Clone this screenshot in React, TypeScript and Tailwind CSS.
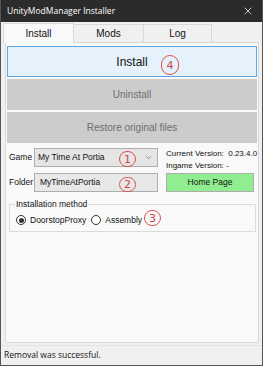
import { X, ChevronDown } from 'lucide-react'

function Mark({ n, className }: { n: string; className: string }) {
  return (
    <span
      className={`absolute flex items-center justify-center rounded-full border border-[#d9534f] text-[#d0453f] text-[11px] leading-none font-['DejaVu_Sans',sans-serif] ${className}`}
    >
      {n}
    </span>
  )
}

function Radio({ checked, label }: { checked?: boolean; label: string }) {
  return (
    <label className="flex items-center gap-[4px]">
      <span className="flex h-[10px] w-[10px] items-center justify-center rounded-full border border-[#333] bg-white">
        {checked && <span className="h-[5px] w-[5px] rounded-full bg-[#333]" />}
      </span>
      <span>{label}</span>
    </label>
  )
}

export default function App() {
  return (
    <div className="flex h-[366px] w-[263px] flex-col border-x border-b border-[#555] bg-[#f0f0f0] font-['Liberation_Sans',Arial,sans-serif] text-[8.5px] text-[#111]">
      {/* title bar */}
      <div className="flex h-[22px] shrink-0 items-center justify-between bg-[#2b2b2b] pl-[6px] pr-[8px] text-[8.5px] text-white font-['Open_Sans',sans-serif]">
        <span className="whitespace-nowrap">UnityModManager Installer</span>
        <X className="h-[12px] w-[12px]" strokeWidth={1.5} />
      </div>

      {/* tabs */}
      <div className="flex h-[20px] shrink-0 items-end pl-[2px]">
        <div className="relative z-10 -mb-px flex h-[20px] w-[71px] items-center justify-center border-x border-t border-[#d9d9d9] bg-[#f9f9f9] text-[10px]">
          Install
        </div>
        <div className="flex h-[18px] w-[70px] items-center justify-center border-t border-r border-[#d9d9d9] bg-[#f0f0f0] text-[10px]">
          Mods
        </div>
        <div className="flex h-[18px] w-[68px] items-center justify-center border-t border-r border-[#d9d9d9] bg-[#f0f0f0] text-[10px]">
          Log
        </div>
      </div>

      {/* tab page */}
      <div className="relative ml-[4px] mr-[3px] flex h-[301px] shrink-0 flex-col border border-[#d9d9d9] bg-[#f9f9f9] px-[1px] pt-[3px]">
        <div className="flex flex-col gap-[2px]">
          <button className="relative flex h-[31px] items-center justify-center border border-[#5aa9e6] bg-[#e5f1fb] text-[12px] text-[#111]">
            Install
          </button>
          <button className="flex h-[31px] items-center justify-center border border-[#cccccc] bg-[#cccccc] text-[10px] text-[#6d6d6d]">
            Uninstall
          </button>
          <button className="flex h-[31px] items-center justify-center border border-[#cccccc] bg-[#cccccc] text-[10px] text-[#6d6d6d]">
            Restore original files
          </button>
        </div>

        <div className="mt-[5px] flex">
          <div className="flex shrink-0 flex-col gap-[6px]">
            <div className="flex items-center">
              <span className="w-[27px] pl-[2px]">Game</span>
              <div className="flex h-[19px] w-[124px] items-center justify-between border border-[#adadad] bg-[#e5e5e5] pl-[3px] pr-[4px]">
                <span>My Time At Portia</span>
                <ChevronDown className="h-[9px] w-[9px] text-[#555]" strokeWidth={1.5} />
              </div>
            </div>
            <div className="flex items-center">
              <span className="w-[27px] pl-[2px]">Folder</span>
              <div className="flex h-[19px] w-[124px] items-center border border-[#adadad] bg-[#e8e8e8] pl-[5px]">
                MyTimeAtPortia
              </div>
            </div>
          </div>
          <div className="ml-[8px] flex flex-col whitespace-nowrap">
            <div className="text-[8px] leading-[12px]">Current Version:&nbsp; 0.23.4.0</div>
            <div className="text-[8px] leading-[12px]">Ingame Version: -</div>
            <button className="mt-[1px] flex h-[19px] w-[88px] items-center justify-center border border-[#adadad] bg-[#90ee90]">
              Home Page
            </button>
          </div>
        </div>

        {/* group box */}
        <div className="relative ml-[2px] mr-[1px] mt-[12px] h-[28px] border border-[#dcdcdc]">
          <span className="absolute -top-[7px] left-[5px] bg-[#f9f9f9] px-px">Installation method</span>
          <div className="flex items-center gap-[5px] pl-[6px] pt-[9px]">
            <Radio checked label="DoorstopProxy" />
            <Radio label="Assembly" />
          </div>
        </div>

        <Mark n="4" className="left-[155px] top-[12px] h-[20px] w-[18px]" />
        <Mark n="1" className="left-[113px] top-[108px] h-[16px] w-[17px]" />
        <Mark n="2" className="left-[113px] top-[134px] h-[15px] w-[17px]" />
        <Mark n="3" className="left-[138px] top-[167px] h-[16px] w-[17px]" />
      </div>

      {/* status bar */}
      <div className="mt-[2px] flex flex-1 items-center border-t border-[#e3e3e3] pl-[3px] font-['Open_Sans',sans-serif] text-[8.5px]">
        Removal was successful.
      </div>
    </div>
  )
}
